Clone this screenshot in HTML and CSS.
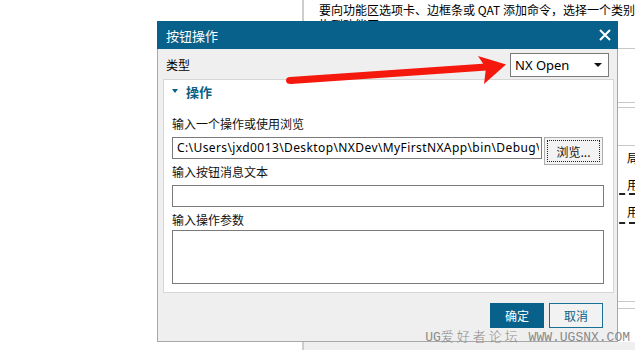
FILE: index.html
```html
<!DOCTYPE html>
<html lang="zh-CN">
<head>
<meta charset="utf-8">
<title>按钮操作</title>
<link rel="stylesheet" href="styles.css">
</head>
<body>
<div class="screen">
  <div class="bg-left"></div>
  <div class="bg-panel">
    <div class="bg-text">
      <p>要向功能区选项卡、边框条或 QAT 添加命令，选择一个类别，然后将命令</p>
      <p>拖到功能区。</p>
    </div>
    <div class="rule r1"></div>
    <div class="rule r2"></div>
    <div class="rule r3"></div>
    <div class="rule r4"></div>
    <div class="side-row s1">局</div>
    <div class="side-row s2">用</div>
    <div class="dash d1"></div>
    <div class="side-row s3">用</div>
    <div class="dash d2"></div>
    <div class="rule r5"></div>
    <div class="rule r6"></div>
    <div class="bg-bottom"></div>
  </div>

  <div class="dialog">
    <div class="titlebar">
      <span class="title">按钮操作</span>
      <svg class="close" width="12" height="12" viewBox="0 0 12 12"><path d="M1 1 L11 11 M11 1 L1 11" stroke="#fff" stroke-width="2" fill="none"/></svg>
    </div>
    <div class="dlg-body">
      <div class="type-row">
        <span class="type-label">类型</span>
        <div class="select"><span>NX Open</span><i class="caret"></i></div>
      </div>
      <div class="group">
        <div class="group-head"><i class="tri"></i><span>操作</span></div>
        <div class="field-label first">输入一个操作或使用浏览</div>
        <div class="input-row">
          <div class="input path"><span class="path-text">C:\Users\jxd0013\Desktop\NXDev\MyFirstNXApp\bin\Debug\MyFirstNXApp.dll</span></div>
          <button class="browse"><span>浏览...</span></button>
        </div>
        <div class="field-label">输入按钮消息文本</div>
        <div class="input wide"></div>
        <div class="field-label">输入操作参数</div>
        <div class="textarea"></div>
      </div>
      <div class="actions">
        <button class="btn primary">确定</button>
        <button class="btn secondary">取消</button>
      </div>
    </div>
  </div>

  <svg class="arrow" width="635" height="350" viewBox="0 0 635 350">
    <g fill="#f5190d" stroke="none">
      <path d="M290 77 L486 63.5 L487 70.5 L291 84 Q286 84 286 80.5 Q286 77 290 77 Z"/>
      <path d="M478 56 L506 64.5 L484 84 L486 68 Z"/>
    </g>
  </svg>

  <div class="watermark"><span class="wm-latin">UG</span><span class="wm-cjk">爱好者论坛</span><span class="wm-latin"> WWW.UGSNX.COM</span></div>
</div>
</body>
</html>
```

FILE: styles.css
```css
* { box-sizing: border-box; margin: 0; padding: 0; }

body {
  margin: 0;
  width: 635px;
  height: 350px;
  overflow: hidden;
  background: #fff;
  font-family: "Noto Sans", "Noto Sans CJK SC", sans-serif;
  font-size: 12px;
  color: #000;
}

.screen {
  position: relative;
  width: 635px;
  height: 350px;
  display: flex;
  overflow: hidden;
}

.bg-left { width: 302px; flex: none; }

.bg-panel {
  flex: 1;
  display: flex;
  flex-direction: column;
  border-left: 2px solid #cdcdcd;
  min-width: 0;
  overflow: hidden;
}

.bg-text {
  padding: 2px 0 0 15px;
  height: 32px;
  font-family: "Noto Sans CJK SC", sans-serif;
  font-size: 12px;
  line-height: 15px;
  white-space: nowrap;
}

.rule { height: 1px; background: #c9c9c9; flex: none; }
.r1 { margin-top: 16px; }
.r2 { margin-top: 53px; }
.r3 { margin-top: 4px; }
.r4 { margin-top: 37px; }
.r5 { margin-top: 77px; }
.r6 { margin-top: 6px; }

.side-row {
  height: 16px;
  line-height: 16px;
  padding-left: 323px;
  font-family: "Noto Sans CJK SC", sans-serif;
  font-size: 12px;
  white-space: nowrap;
  flex: none;
}
.s1 { margin-top: 4px; }
.s2 { margin-top: 11px; }
.s3 { margin-top: 9px; }

.dash { height: 0; border-top: 2px dashed #222; flex: none; }
.d2 { margin-top: 2px; }

.bg-bottom { margin-top: auto; height: 8px; background: #efefef; flex: none; }

/* dialog */
.dialog {
  position: absolute;
  left: 157px;
  top: 21px;
  width: 461px;
  height: 321px;
  display: flex;
  flex-direction: column;
  font-family: "Noto Sans CJK SC", sans-serif;
}

.titlebar {
  height: 28px;
  flex: none;
  background: #08618a;
  display: flex;
  align-items: center;
  justify-content: space-between;
  padding: 0 7px 0 9px;
  color: #fff;
  font-size: 13px;
}

.dlg-body {
  flex: 1;
  background: #efefef;
  border: 1px solid #a8a8a8;
  border-top: none;
  display: flex;
  flex-direction: column;
  padding-top: 4px;
}

.type-row {
  height: 24px;
  display: flex;
  align-items: center;
  justify-content: space-between;
  padding: 0 8px 0 8px;
}
.type-label { font-size: 12px; line-height: 16px; }

.select {
  width: 99px;
  height: 24px;
  background: #fff;
  border: 1px solid #7a7a7a;
  display: flex;
  align-items: center;
  justify-content: space-between;
  padding: 0 6px 0 4px;
  font-family: "Noto Sans", sans-serif;
  font-size: 13px;
}
.caret {
  width: 0; height: 0;
  border-left: 4px solid transparent;
  border-right: 4px solid transparent;
  border-top: 4px solid #111;
}

.group {
  margin: 2px 3px 0 5px;
  background: #fff;
  border: 1px solid #d6d6d6;
  padding: 0 9px 8px 8px;
  display: flex;
  flex-direction: column;
}

.group-head {
  height: 22px;
  display: flex;
  align-items: center;
  color: #0b5f86;
  font-weight: bold;
  font-size: 13px;
}
.tri {
  width: 0; height: 0;
  border-left: 3px solid transparent;
  border-right: 3px solid transparent;
  border-top: 4px solid #0b5f86;
  margin-right: 8px;
}

.field-label {
  height: 14px;
  line-height: 14px;
  font-size: 12px;
  color: #111;
}
.field-label.first { margin-top: 15px; }

.input-row {
  margin-top: 6px;
  height: 28px;
  display: flex;
  gap: 2px;
  align-items: flex-start;
}

.input {
  height: 22px;
  background: #fff;
  border: 1px solid #7a7a7a;
}
.path {
  width: 370px;
  flex: none;
  overflow: hidden;
  white-space: nowrap;
  padding-left: 4px;
  line-height: 20px;
  font-family: "Noto Sans", sans-serif;
  font-size: 12px;
  letter-spacing: 0.4px;
}
.path-text { display: block; width: 362px; overflow: hidden; }

.browse {
  width: 59px;
  height: 28px;
  flex: none;
  background: #f3f3f3;
  border: 1px solid #adadad;
  padding: 2px;
  font: inherit;
  font-size: 12px;
  color: #111;
}
.browse span {
  display: flex;
  align-items: center;
  justify-content: center;
  height: 100%;
  border: 1px dotted #222;
}

.wide { margin: 6px 0 6px; }

.textarea {
  margin-top: 3px;
  height: 54px;
  background: #fff;
  border: 1px solid #7a7a7a;
}

.actions {
  margin-top: 10px;
  display: flex;
  justify-content: flex-end;
  gap: 5px;
  padding-right: 14px;
}

.btn {
  width: 54px;
  height: 25px;
  font: inherit;
  font-size: 12px;
}
.primary { background: #08618a; color: #fff; border: 1px solid #08618a; }
.secondary { background: #f2f2f2; color: #0b5f86; border: 1px solid #1a6f96; }

.arrow {
  position: absolute;
  left: 0;
  top: 0;
  pointer-events: none;
}

.watermark {
  position: absolute;
  right: 5px;
  top: 327px;
  font-size: 13px;
  line-height: 18px;
  color: #8a8a8a;
  white-space: nowrap;
}
.wm-latin { font-family: "Liberation Mono", monospace; white-space: pre; }
.wm-cjk { font-family: "Noto Sans CJK SC", sans-serif; letter-spacing: 3px; font-weight: 300; }
```
